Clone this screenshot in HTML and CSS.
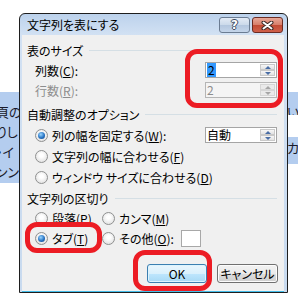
FILE: index.html
```html
<!DOCTYPE html>
<html lang="ja">

<head>
    <meta charset="UTF-8">
    <meta name="viewport" content="width=device-width, initial-scale=1.0">
    <title>文字列を表にする</title>
    <link rel="stylesheet" href="styles.css">
</head>

<body>
    <div class="doc">
        <div class="doc-left">
            <div>頁の</div>
            <div>りし</div>
            <div>・イ</div>
            <div>ンン</div>
        </div>
        <div class="doc-right">
            <div class="hl hl-a">い</div>
            <div class="hl hl-b">カ</div>
        </div>
    </div>

    <div class="dialog">
        <div class="titlebar">
            <span class="title">文字列を表にする</span>
            <div class="caption-btns">
                <span class="cbtn help">?</span>
                <span class="cbtn close">
                    <svg width="13" height="9" viewBox="0 0 13 9">
                        <path d="M2.5 1.5 L10.5 7.5 M10.5 1.5 L2.5 7.5" stroke="#3b2a27" stroke-width="4" stroke-linecap="round" fill="none"/>
                        <path d="M2.5 1.5 L10.5 7.5 M10.5 1.5 L2.5 7.5" stroke="#fff" stroke-width="2" stroke-linecap="round" fill="none"/>
                    </svg>
                </span>
            </div>
        </div>

        <div class="client">
            <div class="group">表のサイズ</div>

            <div class="row">
                <span class="label">列数(<u>C</u>):</span>
                <div class="spin">
                    <span class="val"><span class="sel">2</span></span>
                    <div class="arrows"><span class="up"></span><span class="down"></span></div>
                </div>
            </div>

            <div class="row">
                <span class="label disabled">行数(<u>R</u>):</span>
                <div class="spin spin-off">
                    <span class="val">2</span>
                    <div class="arrows"><span class="up"></span><span class="down"></span></div>
                </div>
            </div>

            <div class="group group-gap">自動調整のオプション</div>

            <div class="row rrow r1">
                <span class="radio checked"></span>
                <span class="label">列の幅を固定する(<u>W</u>):</span>
                <div class="spin">
                    <span class="val">自動</span>
                    <div class="arrows"><span class="up"></span><span class="down"></span></div>
                </div>
            </div>

            <div class="row rrow r2">
                <span class="radio"></span>
                <span class="label">文字列の幅に合わせる(<u>F</u>)</span>
            </div>

            <div class="row rrow r3">
                <span class="radio"></span>
                <span class="label">ウィンドウ サイズに合わせる(<u>D</u>)</span>
            </div>

            <div class="group">文字列の区切り</div>

            <div class="row">
                <div class="col">
                    <span class="radio"></span>
                    <span>段落(<u>P</u>)</span>
                </div>
                <div class="col">
                    <span class="radio"></span>
                    <span>カンマ(<u>M</u>)</span>
                </div>
            </div>

            <div class="row">
                <div class="col">
                    <span class="radio checked"></span>
                    <span>タブ(<u>T</u>)</span>
                </div>
                <div class="col">
                    <span class="radio"></span>
                    <span>その他(<u>O</u>):</span>
                    <span class="other-box"></span>
                </div>
            </div>

            <div class="buttons">
                <button class="btn btn-default">OK</button>
                <button class="btn btn-cancel">キャンセル</button>
            </div>
        </div>
    </div>

    <div class="mark mark-size"></div>
    <div class="mark mark-tab"></div>
    <div class="mark mark-ok"></div>
</body>

</html>
```

FILE: styles.css
```css
body {
    margin: 0;
    padding: 0;
    width: 298px;
    height: 302px;
    overflow: hidden;
    position: relative;
    background-color: #fff;
    font-family: "Noto Sans CJK JP", "Noto Sans", sans-serif;
    font-feature-settings: "palt";
    font-size: 12px;
    color: #000;
}

/* document behind the dialog */
.doc {
    display: flex;
    justify-content: space-between;
    padding-top: 92px;
    font-size: 13px;
    color: #1a1a2a;
}

.doc-left {
    width: 20px;
    height: 91px;
    padding-top: 10px;
    box-sizing: border-box;
    background-color: #b4cdef;
    line-height: 20px;
    overflow: hidden;
    white-space: nowrap;
    text-indent: -4px;
}

.doc-right {
    width: 10px;
    display: flex;
    flex-direction: column;
    gap: 22px;
    overflow: hidden;
}

.hl {
    background-color: #b4cdef;
    line-height: 20px;
    text-indent: -1px;
    overflow: hidden;
}

.hl-a {
    height: 23px;
    padding-top: 10px;
    box-sizing: border-box;
}

.hl-b {
    height: 27px;
    padding-top: 1px;
    box-sizing: border-box;
}

/* dialog window */
.dialog {
    position: absolute;
    left: 19px;
    top: 13px;
    width: 269px;
    height: 280px;
    box-sizing: border-box;
    border: 1px solid #1e1e1e;
    border-radius: 6px 6px 0 0;
    background: linear-gradient(#bcd2ec, #d2e1f3 21px, #c8daef);
    display: flex;
    flex-direction: column;
}

.titlebar {
    height: 21px;
    display: flex;
    justify-content: space-between;
    align-items: flex-start;
    padding: 0 4px 0 7px;
}

.title {
    line-height: 22px;
    font-size: 12px;
}

.caption-btns {
    display: flex;
    gap: 2px;
    margin-top: 3px;
}

.cbtn {
    width: 31px;
    height: 16px;
    box-sizing: border-box;
    border-radius: 3px;
    display: flex;
    align-items: center;
    justify-content: center;
}

.help {
    border: 1px solid #6b7c92;
    background: linear-gradient(#e3ebf5, #cbd9ea 50%, #b3c6de 51%, #c4d5ea);
    font-family: "DejaVu Sans", sans-serif;
    font-weight: bold;
    font-size: 12px;
    color: #fff;
    text-shadow: -1px 0 #3c4b5e, 1px 0 #3c4b5e, 0 -1px #3c4b5e, 0 1px #3c4b5e;
}

.close {
    border: 1px solid #6b2b22;
    background: linear-gradient(#e8a898, #d77d69 50%, #c24a33 51%, #d0604a);
}

.client {
    flex: 1;
    margin: 0 3px 0 2px;
    padding-top: 5px;
    background-color: #f0f0f0;
    border-bottom: 1px solid #44bde9;
    display: flex;
    flex-direction: column;
}

.group {
    height: 20px;
    display: flex;
    align-items: center;
    gap: 6px;
    padding: 0 7px 0 5px;
}

.group::after {
    content: "";
    flex: 1;
    height: 1px;
    background-color: #d5dfe5;
}

.group-gap {
    margin-top: 4px;
}

.row {
    height: 20px;
    display: flex;
    align-items: center;
    padding: 0 7px 0 13px;
}

.rrow {
    gap: 4px;
}

.r1 {
    height: 22px;
}

.r2,
.r3 {
    height: 21px;
}

.label {
    flex: 1;
}

.disabled {
    color: #8d8d8d;
}

.col {
    width: 67px;
    display: flex;
    align-items: center;
    gap: 4px;
}

.col:last-child {
    width: auto;
}

/* spin boxes */
.spin {
    width: 72px;
    height: 16px;
    box-sizing: border-box;
    border: 1px solid #a5a5a5;
    background-color: #fff;
    display: flex;
}

.val {
    flex: 1;
    padding-left: 1px;
    line-height: 14px;
}

.sel {
    display: inline-block;
    background-color: #3399ff;
    padding: 0 1px;
}

.arrows {
    width: 15px;
    margin: 1px;
    display: flex;
    flex-direction: column;
}

.arrows span {
    flex: 1;
    box-sizing: border-box;
    border: 1px solid #c9c9c9;
    background: linear-gradient(#f7f7f7, #e2e2e2);
    display: flex;
    align-items: center;
    justify-content: center;
}

.arrows span::after {
    content: "";
    border-left: 3px solid transparent;
    border-right: 3px solid transparent;
}

.up::after {
    border-bottom: 3px solid #4a6ea6;
}

.down::after {
    border-top: 3px solid #4a6ea6;
}

.spin-off {
    border-color: #b5b5b5;
    background-color: #f4f4f4;
}

.spin-off .val {
    color: #8d8d8d;
}

.spin-off .arrows span {
    background: #eaeaea;
    border-color: #d6d6d6;
}

.spin-off .up::after {
    border-bottom-color: #a6a6a6;
}

.spin-off .down::after {
    border-top-color: #a6a6a6;
}

/* radio buttons */
.radio {
    width: 13px;
    height: 13px;
    flex: none;
    box-sizing: border-box;
    border-radius: 50%;
    border: 1px solid #8f9090;
    background: radial-gradient(circle at 50% 40%, #ffffff 20%, #d8d8d8);
    display: flex;
    align-items: center;
    justify-content: center;
}

.checked::after {
    content: "";
    width: 7px;
    height: 7px;
    border-radius: 50%;
    background: radial-gradient(circle at 40% 35%, #9ad6ff, #2874c4 55%, #0d3f7c);
}

.other-box {
    width: 20px;
    height: 17px;
    box-sizing: border-box;
    margin-left: 3px;
    border: 1px solid #a8a8a8;
    background-color: #fff;
}

/* push buttons */
.buttons {
    margin-top: 16px;
    height: 19px;
    display: flex;
    justify-content: flex-end;
    gap: 10px;
    padding-right: 6px;
}

.btn {
    height: 19px;
    padding: 0;
    box-sizing: border-box;
    border-radius: 3px;
    font-family: inherit;
    font-feature-settings: "palt";
    font-size: 12px;
    color: #000;
    line-height: 16px;
}

.btn-default {
    width: 60px;
    border: 1px solid #3c7fb1;
    background: linear-gradient(#eaf6fd, #d9f0fc 50%, #bee6fd 51%, #a7d9f5);
    box-shadow: inset 0 0 0 1px #ddf4fe;
}

.btn-cancel {
    width: 61px;
    border: 1px solid #707070;
    background: linear-gradient(#f2f2f2, #ebebeb 50%, #dddddd 51%, #cfcfcf);
    box-shadow: inset 0 0 0 1px #fcfcfc;
}

/* red highlight marks drawn over the screenshot */
.mark {
    position: absolute;
    box-sizing: border-box;
    border: 5px solid #ec1c24;
    border-radius: 12px;
}

.mark-size {
    left: 185px;
    top: 49px;
    width: 98px;
    height: 59px;
}

.mark-tab {
    left: 25px;
    top: 222px;
    width: 77px;
    height: 31px;
}

.mark-ok {
    left: 133px;
    top: 250px;
    width: 79px;
    height: 41px;
}
```
